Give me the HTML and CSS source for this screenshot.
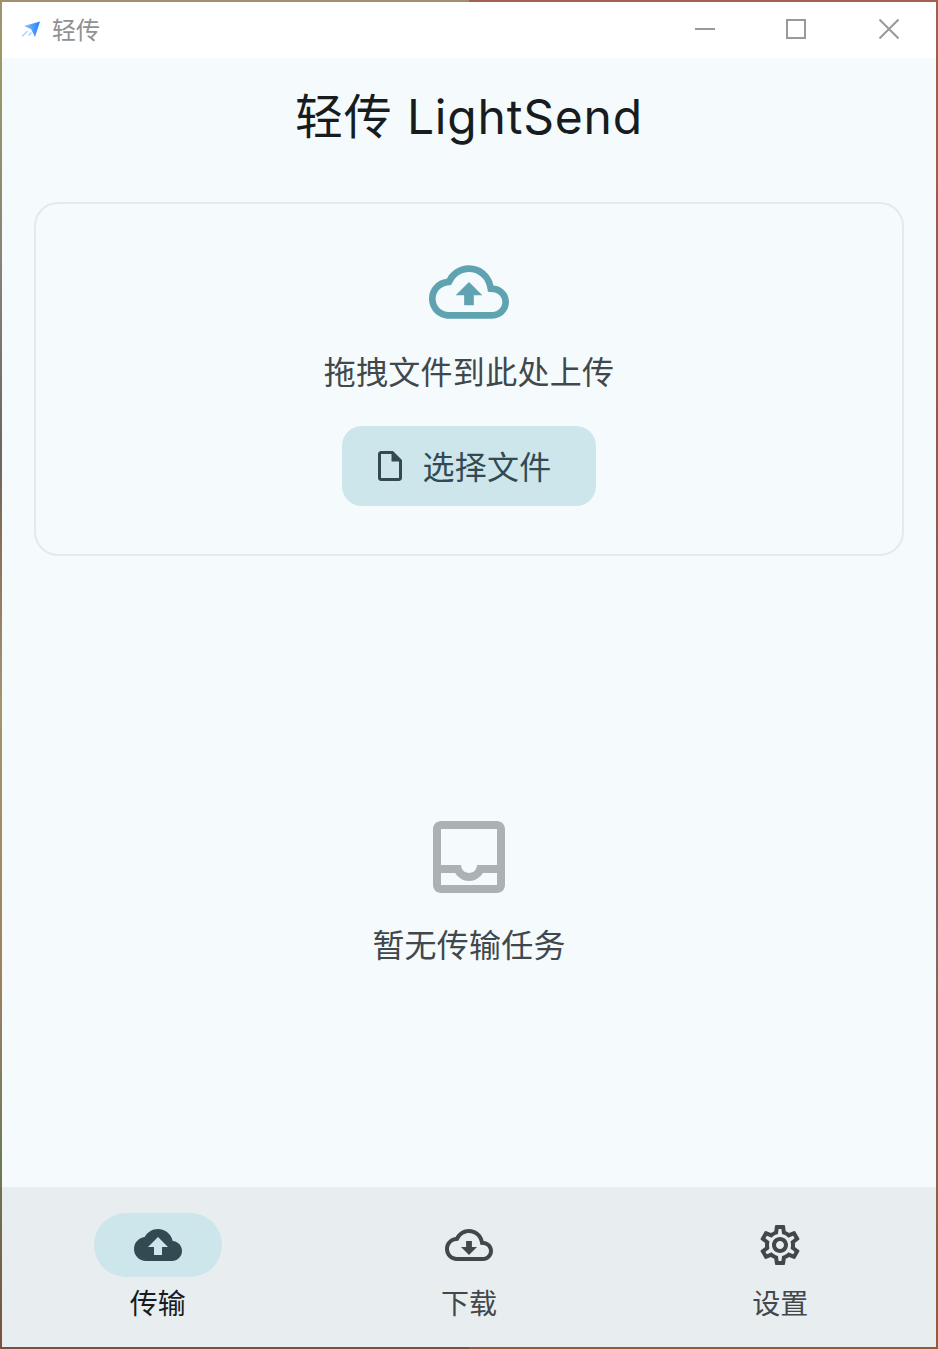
FILE: index.html

```html
<!DOCTYPE html>
<html lang="zh-CN">
<head>
    <meta charset="UTF-8">
    <title>轻传 LightSend</title>
    <link rel="stylesheet" href="styles.css">
</head>
<body>
    <div class="desktop">
    <div class="window">
        <header class="titlebar">
            <svg class="app-logo" viewBox="0 0 20 18">
                <defs>
                    <linearGradient id="logoFill" x1="0" y1="0" x2="1" y2="0">
                        <stop offset="0" stop-color="#8cc4ff"/>
                        <stop offset="1" stop-color="#1f7fff"/>
                    </linearGradient>
                </defs>
                <path fill="url(#logoFill)" d="M3 5 19 .5 14 16 10 8z"/>
                <path fill="#a9d2ff" d="M.5 15 6 9.5l1 1L1.5 16zM7 14l3-3 1 1-3 3z"/>
            </svg>
            <span class="app-name">轻传</span>
            <div class="win-controls">
                <button class="win-btn"><svg viewBox="0 0 20 20"><path d="M0 10h20"/></svg></button>
                <button class="win-btn"><svg viewBox="0 0 20 20"><path d="M1 1h18v18H1z"/></svg></button>
                <button class="win-btn"><svg viewBox="0 0 20 20"><path d="M.5.5l19 19M19.5.5l-19 19"/></svg></button>
            </div>
        </header>

        <main class="content">
            <h1 class="page-title">轻传 LightSend</h1>

            <section class="drop-card">
                <svg class="drop-icon" viewBox="0 0 24 24"><path d="M19.35 10.04C18.67 6.59 15.64 4 12 4 9.11 4 6.6 5.64 5.35 8.04 2.34 8.36 0 10.91 0 14c0 3.31 2.69 6 6 6h13c2.76 0 5-2.24 5-5 0-2.64-2.05-4.78-4.65-4.96zM19 18H6c-2.21 0-4-1.79-4-4 0-2.05 1.53-3.76 3.56-3.97l1.07-.11.5-.95C8.08 7.14 9.94 6 12 6c2.62 0 4.88 1.86 5.39 4.43l.3 1.5 1.53.11c1.56.1 2.78 1.41 2.78 2.96 0 1.65-1.35 3-3 3zM8 13h2.55v3h2.9v-3H16l-4-4z"/></svg>
                <p class="drop-text">拖拽文件到此处上传</p>
                <button class="pick-btn">
                    <svg class="pick-icon" viewBox="0 0 24 24"><path d="M14 2H6c-1.1 0-1.99.9-1.99 2L4 20c0 1.1.89 2 1.99 2H18c1.1 0 2-.9 2-2V8l-6-6zM6 20V4h7v5h5v11H6z"/></svg>
                    <span>选择文件</span>
                </button>
            </section>

            <section class="empty">
                <svg class="empty-icon" viewBox="0 0 24 24"><path d="M19 3H5c-1.1 0-2 .9-2 2v14c0 1.1.9 2 2 2h14c1.1 0 2-.9 2-2V5c0-1.1-.9-2-2-2zm0 16H5v-3h3.56c.69 1.19 1.97 2 3.45 2s2.75-.81 3.45-2H19v3zm0-5h-4.99c0 1.1-.9 2-2 2s-2-.9-2-2H5V5h14v9z"/></svg>
                <p class="empty-text">暂无传输任务</p>
            </section>
        </main>

        <nav class="bottom-nav">
            <div class="nav-item active">
                <div class="nav-pill">
                    <svg class="nav-icon" viewBox="0 0 24 24"><path d="M19.35 10.04C18.67 6.59 15.64 4 12 4 9.11 4 6.6 5.64 5.35 8.04 2.34 8.36 0 10.91 0 14c0 3.31 2.69 6 6 6h13c2.76 0 5-2.24 5-5 0-2.64-2.05-4.78-4.65-4.96zM14 13v4h-4v-4H7l5-5 5 5h-3z"/></svg>
                </div>
                <span class="nav-label">传输</span>
            </div>
            <div class="nav-item">
                <div class="nav-pill">
                    <svg class="nav-icon" viewBox="0 0 24 24"><path d="M19.35 10.04C18.67 6.59 15.64 4 12 4 9.11 4 6.6 5.64 5.35 8.04 2.34 8.36 0 10.91 0 14c0 3.31 2.69 6 6 6h13c2.76 0 5-2.24 5-5 0-2.64-2.05-4.78-4.65-4.96zM19 18H6c-2.21 0-4-1.79-4-4 0-2.05 1.53-3.76 3.56-3.97l1.07-.11.5-.95C8.08 7.14 9.94 6 12 6c2.62 0 4.88 1.86 5.39 4.43l.3 1.5 1.53.11c1.56.1 2.78 1.41 2.78 2.96 0 1.65-1.35 3-3 3zm-5.55-8h-2.9v3H8l4 4 4-4h-2.55z"/></svg>
                </div>
                <span class="nav-label">下载</span>
            </div>
            <div class="nav-item">
                <div class="nav-pill">
                    <svg class="nav-icon" viewBox="0 0 24 24"><path d="M19.43 12.98c.04-.32.07-.64.07-.98 0-.34-.03-.66-.07-.98l2.11-1.65c.19-.15.24-.42.12-.64l-2-3.46c-.09-.16-.26-.25-.44-.25-.06 0-.12.01-.17.03l-2.49 1c-.52-.4-1.08-.73-1.69-.98l-.38-2.65C14.46 2.18 14.25 2 14 2h-4c-.25 0-.46.18-.49.42l-.38 2.65c-.61.25-1.17.59-1.69.98l-2.49-1c-.06-.02-.12-.03-.18-.03-.17 0-.34.09-.43.25l-2 3.46c-.13.22-.07.49.12.64l2.11 1.65c-.04.32-.07.65-.07.98 0 .33.03.66.07.98l-2.11 1.65c-.19.15-.24.42-.12.64l2 3.46c.09.16.26.25.44.25.06 0 .12-.01.17-.03l2.49-1c.52.4 1.08.73 1.69.98l.38 2.65c.03.24.24.42.49.42h4c.25 0 .46-.18.49-.42l.38-2.65c.61-.25 1.17-.59 1.69-.98l2.49 1c.06.02.12.03.18.03.17 0 .34-.09.43-.25l2-3.46c.12-.22.07-.49-.12-.64l-2.11-1.65zm-1.98-1.71c.04.31.05.52.05.73 0 .21-.02.43-.05.73l-.14 1.13.89.7 1.08.84-.7 1.21-1.27-.51-1.04-.42-.9.68c-.43.32-.84.56-1.25.73l-1.06.43-.16 1.13-.2 1.35h-1.4l-.19-1.35-.16-1.13-1.06-.43c-.43-.18-.83-.41-1.23-.71l-.91-.7-1.06.43-1.27.51-.7-1.21 1.08-.84.89-.7-.14-1.13c-.03-.31-.05-.54-.05-.74s.02-.43.05-.73l.14-1.13-.89-.7-1.08-.84.7-1.21 1.27.51 1.04.42.9-.68c.43-.32.84-.56 1.25-.73l1.06-.43.16-1.13.2-1.35h1.39l.19 1.35.16 1.13 1.06.43c.43.18.83.41 1.23.71l.91.7 1.06-.43 1.27-.51.7 1.21-1.07.85-.89.7.14 1.13zM12 8c-2.21 0-4 1.79-4 4s1.79 4 4 4 4-1.79 4-4-1.79-4-4-4zm0 6c-1.1 0-2-.9-2-2s.9-2 2-2 2 .9 2 2-.9 2-2 2z"/></svg>
                </div>
                <span class="nav-label">设置</span>
            </div>
        </nav>
    </div>
    </div>
</body>
</html>
```

FILE: styles.css

```css
* {
    box-sizing: border-box;
}
html, body {
    height: 100%;
}
body {
    margin: 0;
    font-family: Inter, "Noto Sans CJK SC", sans-serif;
    color: #41484b;
}
p, h1 {
    margin: 0;
    font-weight: 400;
}
svg {
    display: block;
    fill: currentColor;
}

/* wallpaper showing around the window */
.desktop {
    height: 100%;
    padding: 2px;
    background:
        linear-gradient(#a09070 0, #9a9a66 5%, #8a8078 20%, #6b6660 34%, #8a6f55 40%, #a3946f 52%, #a08060 72%, #6f7a55 86%, #7a5040 100%) left / 50% 100% no-repeat,
        linear-gradient(#a3604e 0, #8c5a4c 40%, #7d6a60 70%, #96583a 100%) right / 50% 100% no-repeat;
}
.window {
    height: 100%;
    display: flex;
    flex-direction: column;
    background-color: #f5fafd;
}

/* title bar */
.titlebar {
    height: 56px;
    flex: none;
    display: flex;
    align-items: center;
    padding-left: 19px;
    background-color: #fff;
}
.app-logo {
    width: 20px;
    height: 18px;
    margin-right: 11px;
}
.app-name {
    margin-top: 2px;
    font-size: 24px;
    line-height: 32px;
    color: #8e9294;
}
.win-controls {
    margin-left: auto;
    display: flex;
}
.win-btn {
    width: 92px;
    height: 56px;
    padding: 0 0 2px;
    border: 0;
    background: none;
    display: flex;
    align-items: center;
    justify-content: center;
}
.win-btn:first-child {
    width: 90px;
}
.win-btn:last-child {
    width: 94px;
}
.win-btn svg {
    width: 20px;
    height: 20px;
    fill: none;
    stroke: #999;
    stroke-width: 2;
}

.content {
    flex: 1;
    display: flex;
    flex-direction: column;
    align-items: center;
    padding: 0 32px;
}
.page-title {
    margin-top: 25px;
    font-size: 48px;
    line-height: 68px;
    letter-spacing: .8px;
    color: #171c1f;
}
.drop-card {
    align-self: stretch;
    height: 354px;
    margin-top: 51px;
    border: 2px solid #e3e9ec;
    border-radius: 24px;
    display: flex;
    flex-direction: column;
    align-items: center;
    padding-top: 48px;
}
.drop-icon {
    width: 80px;
    height: 80px;
    color: #5fa3b1;
}
.drop-text {
    margin-top: 19px;
    font-size: 32px;
    line-height: 44px;
    letter-spacing: .3px;
}
.pick-btn {
    margin-top: 31px;
    width: 254px;
    height: 80px;
    padding: 0 15px 0 0;
    border: 0;
    border-radius: 20px;
    background-color: #cde6eb;
    color: #334a52;
    font: inherit;
    font-size: 32px;
    letter-spacing: .2px;
    display: flex;
    align-items: center;
    justify-content: center;
    gap: 15px;
}
.pick-btn span {
    margin-bottom: 2px;
}
.pick-icon {
    width: 36px;
    height: 36px;
}
.empty {
    margin-top: 253px;
    display: flex;
    flex-direction: column;
    align-items: center;
}
.empty-icon {
    width: 96px;
    height: 96px;
    color: #abb2b5;
}
.empty-text {
    font-size: 32px;
    line-height: 44px;
    letter-spacing: .2px;
    margin-top: 19px;
}

/* bottom navigation */
.bottom-nav {
    height: 160px;
    flex: none;
    display: grid;
    grid-template-columns: repeat(3, 1fr);
    padding-top: 26px;
    background-color: #e8edf0;
}
.nav-item {
    display: flex;
    flex-direction: column;
    align-items: center;
}
.nav-pill {
    width: 128px;
    height: 64px;
    border-radius: 32px;
    display: flex;
    align-items: center;
    justify-content: center;
}
.active .nav-pill {
    background-color: #cde6eb;
    color: #334a52;
}
.nav-icon {
    width: 48px;
    height: 48px;
}
.nav-label {
    margin-top: 7px;
    font-size: 28px;
    line-height: 40px;
}
.active .nav-label {
    color: #171c1f;
}
```
